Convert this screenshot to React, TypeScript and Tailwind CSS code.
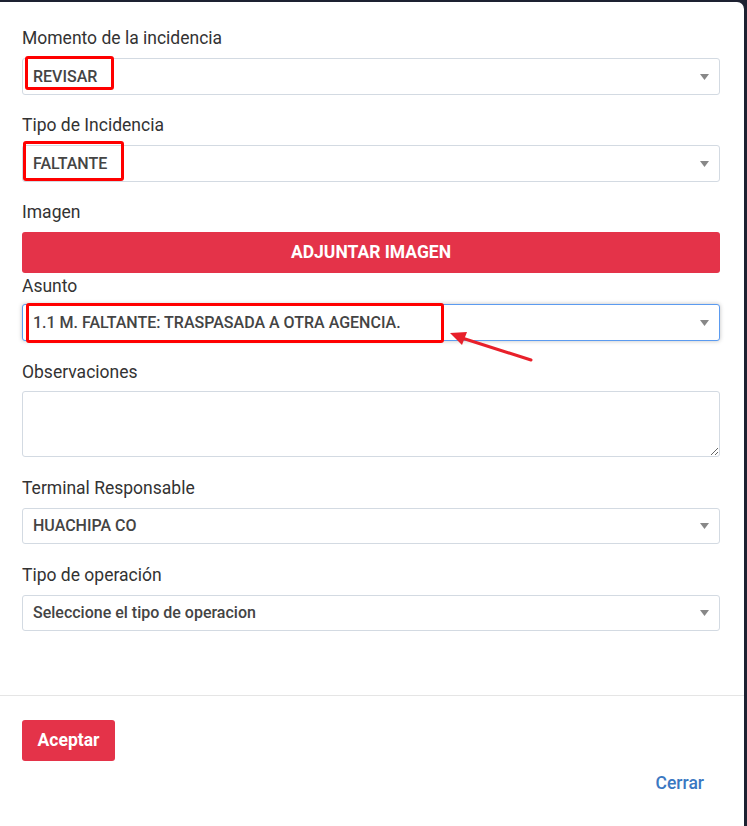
import React from 'react';

const font = { fontFamily: 'Roboto, "Liberation Sans", sans-serif' };

function Caret() {
  return (
    <svg width="9" height="6" viewBox="0 0 9 6" className="shrink-0">
      <path d="M0 0 L9 0 L4.5 6 Z" fill="#888" />
    </svg>
  );
}

function Label({ children }: { children: React.ReactNode }) {
  return <div className="pt-[1px] text-[17.5px] leading-[23px] text-[#333]">{children}</div>;
}

function Select({ value, focused, short }: { value: string; focused?: boolean; short?: boolean }) {
  return (
    <div
      className={
        'flex items-center justify-between rounded-[3px] border bg-white pl-[10px] pr-[10px] ' +
        (short ? 'h-[36px] ' : 'h-[37px] ') +
        (focused
          ? 'border-[#5b9bf0] shadow-[0_0_4px_rgba(0,0,0,0.25)]'
          : 'border-[#d3dae2]')
      }
    >
      <span className="text-[16px] font-medium text-[#444]">{value}</span>
      <Caret />
    </div>
  );
}

function Mark({ className }: { className: string }) {
  return <div className={'pointer-events-none absolute rounded-[3px] border-[3px] border-[#ff0000] ' + className} />;
}

export default function App() {
  return (
    <div className="h-[826px] overflow-hidden bg-[#1d2131] pt-[2px] pr-[3px]" style={font}>
      <div className="relative h-full rounded-tr-[7px] bg-white">
        <div className="pl-[22px] pr-[24px] pt-[24px]">
          <Label>Momento de la incidencia</Label>
          <div className="mt-[8px]">
            <Select value="REVISAR" />
          </div>

          <div className="mt-[18px]">
            <Label>Tipo de Incidencia</Label>
          </div>
          <div className="mt-[8px]">
            <Select value="FALTANTE" />
          </div>

          <div className="mt-[18px]">
            <Label>Imagen</Label>
          </div>
          <button className="mt-[8px] flex h-[41px] w-full items-center justify-center rounded-[3px] bg-[#e43349] text-[17.5px] font-bold text-white">
            ADJUNTAR IMAGEN
          </button>

          <div className="mt-[1px]">
            <Label>Asunto</Label>
          </div>
          <div className="mt-[6px]">
            <Select value="1.1 M. FALTANTE: TRASPASADA A OTRA AGENCIA." focused />
          </div>

          <div className="mt-[19px]">
            <Label>Observaciones</Label>
          </div>
          <textarea className="mt-[7px] block h-[66px] w-full rounded-[3px] border border-[#d3dae2] bg-white" />

          <div className="mt-[19px]">
            <Label>Terminal Responsable</Label>
          </div>
          <div className="mt-[8px]">
            <Select value="HUACHIPA CO" short />
          </div>

          <div className="mt-[19px]">
            <Label>Tipo de operación</Label>
          </div>
          <div className="mt-[8px]">
            <Select value="Seleccione el tipo de operacion" short />
          </div>
        </div>

        <div className="mt-[64px] border-t border-[#e5e5e5]" />

        <div className="px-[22px] pt-[24px]">
          <button className="h-[41px] w-[93px] rounded-[3px] bg-[#e43349] text-[17.5px] font-bold text-white">
            Aceptar
          </button>
          <div className="mt-[10px] flex justify-end pr-[18px]">
            <span className="text-[17.5px] leading-6 font-medium text-[#3b78c2]">Cerrar</span>
          </div>
        </div>

        <Mark className="left-[25px] top-[54px] h-[34px] w-[89px]" />
        <Mark className="left-[23px] top-[139px] h-[40px] w-[101px]" />
        <Mark className="left-[26px] top-[301px] h-[40px] w-[418px]" />

        <svg className="pointer-events-none absolute left-0 top-0" width="744" height="826">
          <line x1="531" y1="358" x2="462" y2="336" stroke="#e8202a" strokeWidth="3" strokeLinecap="round" />
          <path d="M450 331 L467 330 L462 343 Z" fill="#e8202a" />
        </svg>
      </div>
    </div>
  );
}
